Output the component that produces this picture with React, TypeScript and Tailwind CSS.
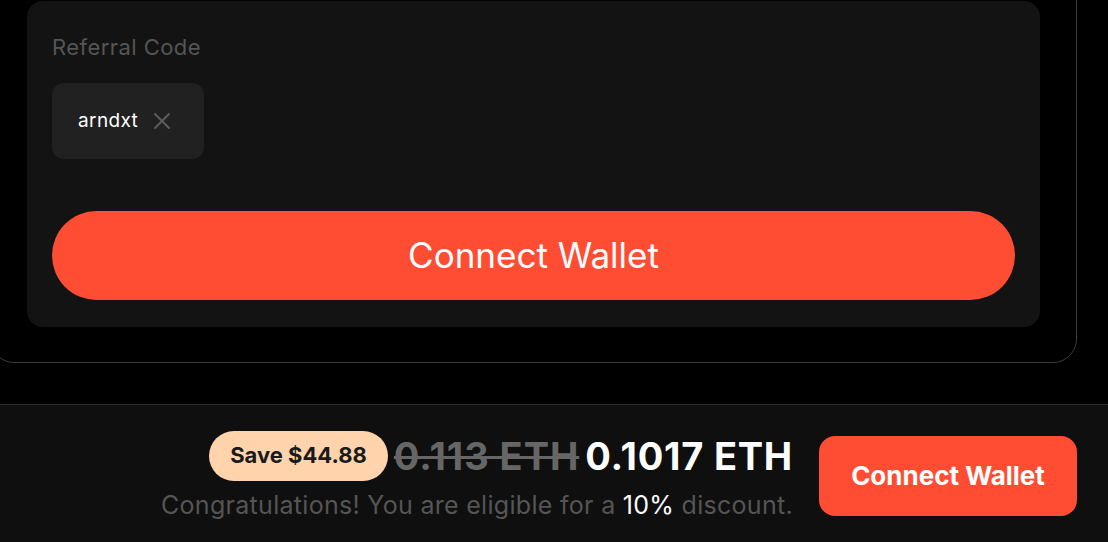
const font = { fontFamily: "Inter, 'Noto Sans', sans-serif" };

function CloseIcon() {
  return (
    <svg width="18" height="18" viewBox="0 0 18 18" fill="none" className="text-[#5c5c5c]">
      <path d="M2 2L16 16M16 2L2 16" stroke="currentColor" strokeWidth="2" strokeLinecap="round" />
    </svg>
  );
}

export default function App() {
  return (
    <div
      className="flex h-[542px] w-[1108px] flex-col overflow-hidden bg-black"
      style={font}
    >
      {/* checkout card */}
      <div className="h-[404px] shrink-0">
        <div className="-ml-[10px] -mt-[36px] w-[1087px] rounded-[24px] border border-[#3a3a3a] pb-[35px] pl-[36px] pr-[36px] pt-[36px]">
          <div className="flex flex-col rounded-[16px] bg-[#131313] px-[25px] pb-[27px] pt-[32px]">
            <div className="text-[22px] leading-[28px] tracking-[0.02em] text-[#555555]">Referral Code</div>
            <div className="mt-[22px] flex h-[76px] w-[152px] items-center gap-[15px] rounded-[12px] bg-[#212121] pl-[26px]">
              <span className="text-[19px] tracking-[0.02em] text-white">arndxt</span>
              <CloseIcon />
            </div>
            <button className="mt-[52px] flex h-[89px] w-full items-center justify-center rounded-full bg-[#ff4d33] text-[35px] text-white">
              Connect Wallet
            </button>
          </div>
        </div>
      </div>

      {/* price bar */}
      <div className="flex flex-1 items-center justify-end gap-[26px] border-t border-[#2e2e2e] bg-[#0f0f0f] pr-[31px] pt-[4px]">
        <div className="flex flex-col items-end">
          <div className="flex items-center gap-[6px]">
            <span className="flex h-[50px] items-center rounded-[25px] bg-[#ffd4ad] px-[21px] text-[22px] font-bold text-[#1a1a1a]">
              Save $44.88
            </span>
            <span className="text-[38px] font-bold leading-none tracking-[0.025em] text-[#666666] line-through decoration-[3px]">
              0.113 ETH
            </span>
            <span className="text-[38px] font-bold leading-none tracking-[0.02em] text-white">0.1017 ETH</span>
          </div>
          <div className="mt-[8px] text-[25px] leading-[32px] tracking-[0.012em] text-[#555555]">
            Congratulations! You are eligible for a <span className="text-white">10%</span> discount.
          </div>
        </div>
        <button className="flex h-[80px] w-[258px] items-center justify-center rounded-[16px] bg-[#ff4d33] text-[26px] font-bold text-white">
          Connect Wallet
        </button>
      </div>
    </div>
  );
}
